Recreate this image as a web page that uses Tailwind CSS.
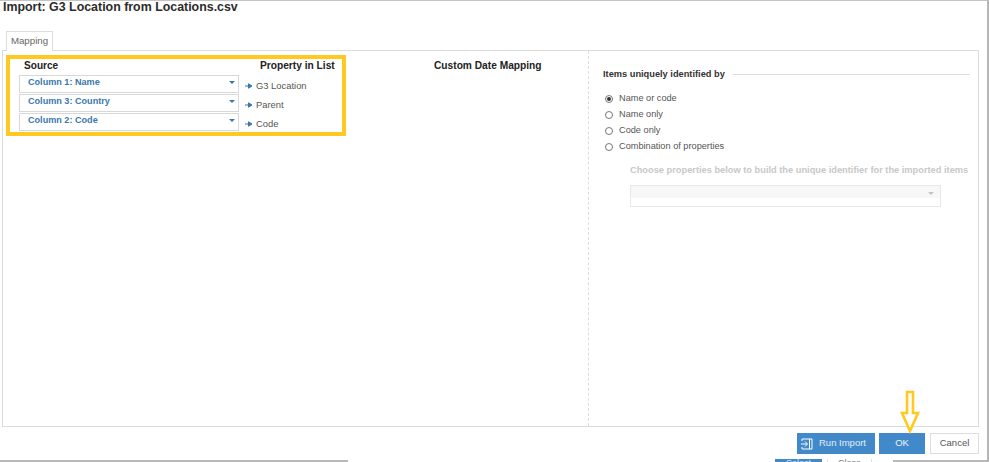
<!DOCTYPE html>
<html lang="en">

<head>
    <meta charset="UTF-8">
    <title>Import</title>
    <script src="https://cdn.jsdelivr.net/npm/@tailwindcss/browser@4"></script>
</head>

<body class="w-[989px] h-[462px] overflow-hidden bg-white font-['Liberation_Sans',Arial,sans-serif] text-[#333]">
    <div class="relative w-[989px] h-[462px] flex flex-col border-t border-t-[#c4c4c4] border-r-2 border-r-[#b5b5b5]">
        <h1 class="pl-[3px] h-[30px] text-[12.4px] leading-[13px] font-bold text-[#2b2b2b]">Import: G3 Location from Locations.csv</h1>

        <div class="pl-[6px] h-[19px] flex">
            <div class="w-[47px] h-[20px] z-10 bg-white border border-[#ddd] border-b-0 text-[9.7px] text-[#666] pt-[2px] text-center">Mapping</div>
        </div>

        <!-- main panel -->
        <main class="ml-[2px] w-[977px] h-[377px] flex border border-[#dcdcdc]">
            <section class="w-[586px] h-full border-r border-dashed border-[#ddd] flex">
                <div class="w-[241px] pl-[16px] pt-[8px]">
                    <h4 class="pl-[5px] h-[13px] text-[10.1px] leading-[13px] font-bold text-[#222]">Source</h4>
                    <div class="flex flex-col gap-[1px] mt-[3px]">
                        <div class="w-[220px] h-[18px] flex justify-between border border-[#d8d8d8] pl-[8px] pr-[3px] text-[9.1px] leading-[13px] font-bold text-[#3a77ad]">Column 1: Name<span class="mt-[5px] w-0 h-0 border-x-[3px] border-x-transparent border-t-[3px] border-t-[#3a77ad]"></span></div>
                        <div class="w-[220px] h-[18px] flex justify-between border border-[#d8d8d8] pl-[8px] pr-[3px] text-[9.1px] leading-[13px] font-bold text-[#3a77ad]">Column 3: Country<span class="mt-[5px] w-0 h-0 border-x-[3px] border-x-transparent border-t-[3px] border-t-[#3a77ad]"></span></div>
                        <div class="w-[220px] h-[18px] flex justify-between border border-[#d8d8d8] pl-[8px] pr-[3px] text-[9.1px] leading-[13px] font-bold text-[#3a77ad]">Column 2: Code<span class="mt-[5px] w-0 h-0 border-x-[3px] border-x-transparent border-t-[3px] border-t-[#3a77ad]"></span></div>
                    </div>
                </div>
                <div class="w-[172px] pt-[8px]">
                    <h4 class="pl-[16px] h-[13px] text-[10.2px] leading-[13px] font-bold text-[#222]">Property in List</h4>
                    <div class="flex flex-col mt-[4px] text-[9.4px] leading-[19px] text-[#555]">
                        <div class="flex items-center h-[19px] gap-[4px] pl-[1px]"><svg width="7" height="6" viewBox="0 0 7 6"><path d="M0 3h4M3.5 .8 7 3 3.5 5.2z" stroke="#3a77ad" fill="#3a77ad"/></svg>G3 Location</div>
                        <div class="flex items-center h-[19px] gap-[4px] pl-[1px]"><svg width="7" height="6" viewBox="0 0 7 6"><path d="M0 3h4M3.5 .8 7 3 3.5 5.2z" stroke="#3a77ad" fill="#3a77ad"/></svg>Parent</div>
                        <div class="flex items-center h-[19px] gap-[4px] pl-[1px]"><svg width="7" height="6" viewBox="0 0 7 6"><path d="M0 3h4M3.5 .8 7 3 3.5 5.2z" stroke="#3a77ad" fill="#3a77ad"/></svg>Code</div>
                    </div>
                </div>
                <div class="pt-[8px] pl-[18px]">
                    <h4 class="text-[10.2px] leading-[13px] font-bold text-[#222]">Custom Date Mapping</h4>
                </div>
            </section>

            <section class="flex-1 pl-[14px] pr-[8px] pt-[17px]">
                <div class="flex items-center gap-[8px]">
                    <h4 class="text-[9.25px] leading-[12px] font-bold text-[#333] whitespace-nowrap">Items uniquely identified by</h4>
                    <div class="flex-1 h-px bg-[#ddd]"></div>
                </div>
                <div class="mt-[11px] flex flex-col text-[9.2px] text-[#555]">
                    <div class="flex items-center h-[16px] gap-[6px] pl-[2px]"><span class="w-[8px] h-[8px] rounded-full border border-[#777] flex items-center justify-center"><span class="w-[4px] h-[4px] rounded-full bg-[#333]"></span></span>Name or code</div>
                    <div class="flex items-center h-[16px] gap-[6px] pl-[2px]"><span class="w-[8px] h-[8px] rounded-full border border-[#777]"></span>Name only</div>
                    <div class="flex items-center h-[16px] gap-[6px] pl-[2px]"><span class="w-[8px] h-[8px] rounded-full border border-[#777]"></span>Code only</div>
                    <div class="flex items-center h-[16px] gap-[6px] pl-[2px]"><span class="w-[8px] h-[8px] rounded-full border border-[#777]"></span>Combination of properties</div>
                </div>
                <div class="pl-[27px] mt-[9px]">
                    <p class="text-[9.27px] leading-[12px] font-bold text-[#c8c8c8] whitespace-nowrap">Choose properties below to build the unique identifier for the imported items</p>
                    <div class="mt-[9px] w-[311px] h-[22px] border border-[#e8e8e8] flex justify-end pr-[6px] pt-[6px] bg-[linear-gradient(#f7f7f7_60%,#fff_60%)]">
                        <span class="w-0 h-0 border-x-[3px] border-x-transparent border-t-[3px] border-t-[#c4c4c4]"></span>
                    </div>
                </div>
            </section>
        </main>

        <!-- footer buttons -->
        <footer class="w-[979px] mt-[6px] flex justify-end">
            <button class="w-[78px] h-[21px] bg-[#4289c9] text-white/85 text-[9.5px] flex items-center pl-[4px] gap-[6px]">
                <svg width="12" height="12" viewBox="0 0 12 12" fill="none" stroke="#fff"><path d="M1 3V1h10v10H1V9M0 6h6M4 3.5 6.5 6 4 8.5M8.5 1v10"/></svg>Run Import
            </button>
            <button class="ml-[4px] w-[46px] h-[21px] bg-[#4289c9] text-white/90 text-[9.5px]">OK</button>
            <button class="ml-[5px] w-[49px] h-[21px] bg-white border border-[#ddd] text-[#555] text-[9.5px]">Cancel</button>
        </footer>

        <!-- window behind the dialog, clipped by the screenshot -->
        <div class="absolute left-0 right-0 bottom-0 h-[3px] flex overflow-hidden text-[9px] leading-[8px] text-center">
            <div class="w-[348px] mt-[1px] bg-[#b9b9b9]"></div>
            <div class="w-[427px]"></div>
            <div class="w-[47px] bg-[#4289c9] text-white/80">Select</div>
            <div class="w-[5px]"></div>
            <div class="w-[45px] border-x border-[#ddd] text-[#777]">Close</div>
            <div class="w-[21px]"></div>
            <div class="flex-1 mt-[1px] bg-[#b9b9b9]"></div>
        </div>

        <!-- yellow annotations -->
        <div class="absolute left-[6px] top-[54px] w-[340px] h-[81px] border-4 border-[#ffc91f]"></div>
        <svg class="absolute left-[899px] top-[389px]" width="22" height="44" viewBox="0 0 22 44" fill="#fff" stroke="#ffc91f" stroke-width="2.6"><path d="M8 2h6v21h5L11 41 3 23h5z"/></svg>
    </div>
</body>

</html>
